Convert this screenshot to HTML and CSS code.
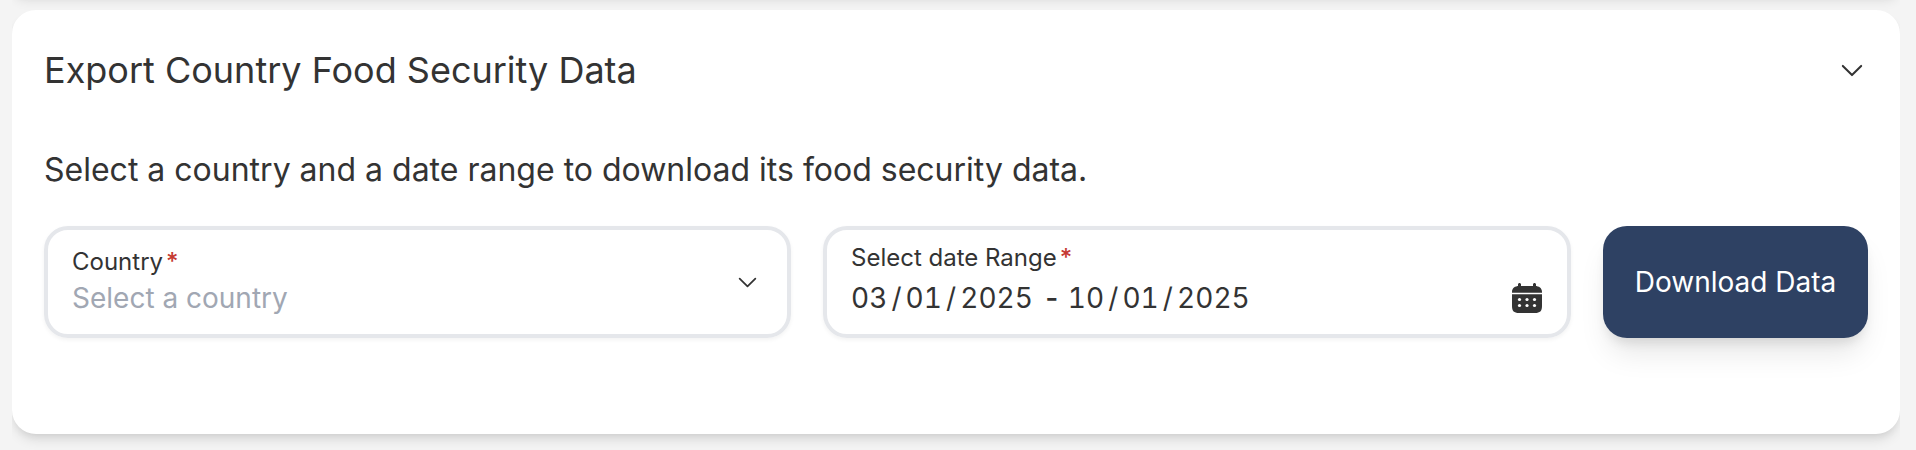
FILE: index.html
```html
<!DOCTYPE html>
<html lang="en">
<head>
<meta charset="utf-8">
<title>Export Country Food Security Data</title>
<link rel="stylesheet" href="styles.css">
</head>
<body>
<main class="accordion">
  <section class="card card-previous"></section>
  <section class="card">
    <header class="card-header">
      <h2 class="title">Export Country Food Security Data</h2>
      <svg class="chevron" viewBox="0 0 24 14"><path d="M2 2l10 10L22 2"/></svg>
    </header>
    <p class="description">Select a country and a date range to download its food security data.</p>
    <form class="form">
      <div class="field field-select">
        <div class="field-text">
          <label class="label">Country<span class="required">*</span></label>
          <span class="placeholder">Select a country</span>
        </div>
        <svg class="chevron chevron-small" viewBox="0 0 24 14"><path d="M2 2l10 10L22 2"/></svg>
      </div>
      <div class="field field-date">
        <div class="field-text">
          <label class="label">Select date Range<span class="required">*</span></label>
          <span class="date"><span>03</span><i>/</i><span>01</span><i>/</i><span>2025</span><b>-</b><span>10</span><i>/</i><span>01</span><i>/</i><span>2025</span></span>
        </div>
        <svg class="calendar" viewBox="0 0 30 30">
          <path d="M7 0h1l1 1v3H6V1zM22 0h1l1 1v3h-3V1z"/>
          <path d="M0 9c0-4 3-6 7-6h16c4 0 7 2 7 6zM0 12h30v11c0 5-2 7-7 7H7c-5 0-7-2-7-7z"/>
          <path class="calendar-line" d="M0 9h30v1H0zM0 11h30v1H0z"/>
          <g class="dots"><circle cx="7.5" cy="16.5" r="1.6"/><circle cx="15" cy="16.5" r="1.6"/><circle cx="22.5" cy="16.5" r="1.6"/><circle cx="7.5" cy="22.5" r="1.6"/><circle cx="15" cy="22.5" r="1.6"/><circle cx="22.5" cy="22.5" r="1.6"/></g>
        </svg>
      </div>
      <button class="download" type="button">Download Data</button>
    </form>
  </section>
</main>
</body>
</html>
```
FILE: styles.css
```css
* { box-sizing: border-box; }
body {
  margin: 0;
  height: 450px;
  overflow: hidden;
  background: #f4f4f4;
  color: #333;
  font-family: Inter, "Liberation Sans", sans-serif;
}
.accordion {
  display: flex;
  flex-direction: column;
  gap: 16px;
  height: 480px;
  margin: -30px 16px 0 12px;
  overflow: hidden;
}
.card {
  flex: none;
  height: 424px;
  padding: 32px;
  border-radius: 24px;
  background: #fff;
  box-shadow: 0 8px 12px -2px rgba(0, 0, 0, .1), 0 4px 8px -4px rgba(0, 0, 0, .1);
}
.card-previous { height: 24px; padding: 0; }
.card-header {
  display: flex;
  align-items: center;
  justify-content: space-between;
  height: 56px;
  padding-right: 5px;
}
.title { margin: 0; font-size: 36px; font-weight: 400; line-height: 56px; }
.chevron { width: 22px; height: 13px; fill: none; stroke: #333; stroke-width: 2.2; stroke-linecap: round; stroke-linejoin: round; }
.chevron-small { width: 19px; height: 11px; }
.description { margin: 48px 0 0; font-size: 32px; line-height: 48px; }
.form {
  display: grid;
  grid-template-columns: 747px 1fr 265px;
  gap: 32px;
  margin-top: 32px;
}
.field {
  display: flex;
  justify-content: space-between;
  height: 112px;
  border: 4px solid #e5e7eb;
  border-radius: 24px;
  box-shadow: 0 2px 4px rgba(0, 0, 0, .05);
}
.field-select { align-items: center; padding: 0 30px 0 24px; }
.field-date { align-items: flex-start; padding: 12px 25px 0 24px; }
.field-text { display: flex; flex-direction: column; white-space: nowrap; }
.label { font-size: 24px; line-height: 32px; }
.required { margin-left: 3px; color: #c53a32; font-weight: 500; }
.placeholder, .date { font-size: 28px; line-height: 40px; }
.placeholder { color: #a1a7b3; }
.date { display: flex; margin-top: 4px; font-variant-numeric: tabular-nums; }
.date i { width: 18.3px; font-style: normal; text-align: center; }
.date b { width: 35px; padding-left: 3px; font-weight: 500; text-align: center; }
.calendar { width: 30px; height: 30px; margin-top: 41px; fill: #333; }
.calendar-line { fill: #333; fill-opacity: .75; }
.dots { fill: #fff; }
.download {
  height: 112px;
  padding: 0;
  border: 0;
  border-radius: 24px;
  background: #2e4163;
  color: #fff;
  font: 400 28px/40px Inter, "Liberation Sans", sans-serif;
  box-shadow: 0 20px 30px -6px rgba(0, 0, 0, .1), 0 8px 12px -4px rgba(0, 0, 0, .1);
}
```
